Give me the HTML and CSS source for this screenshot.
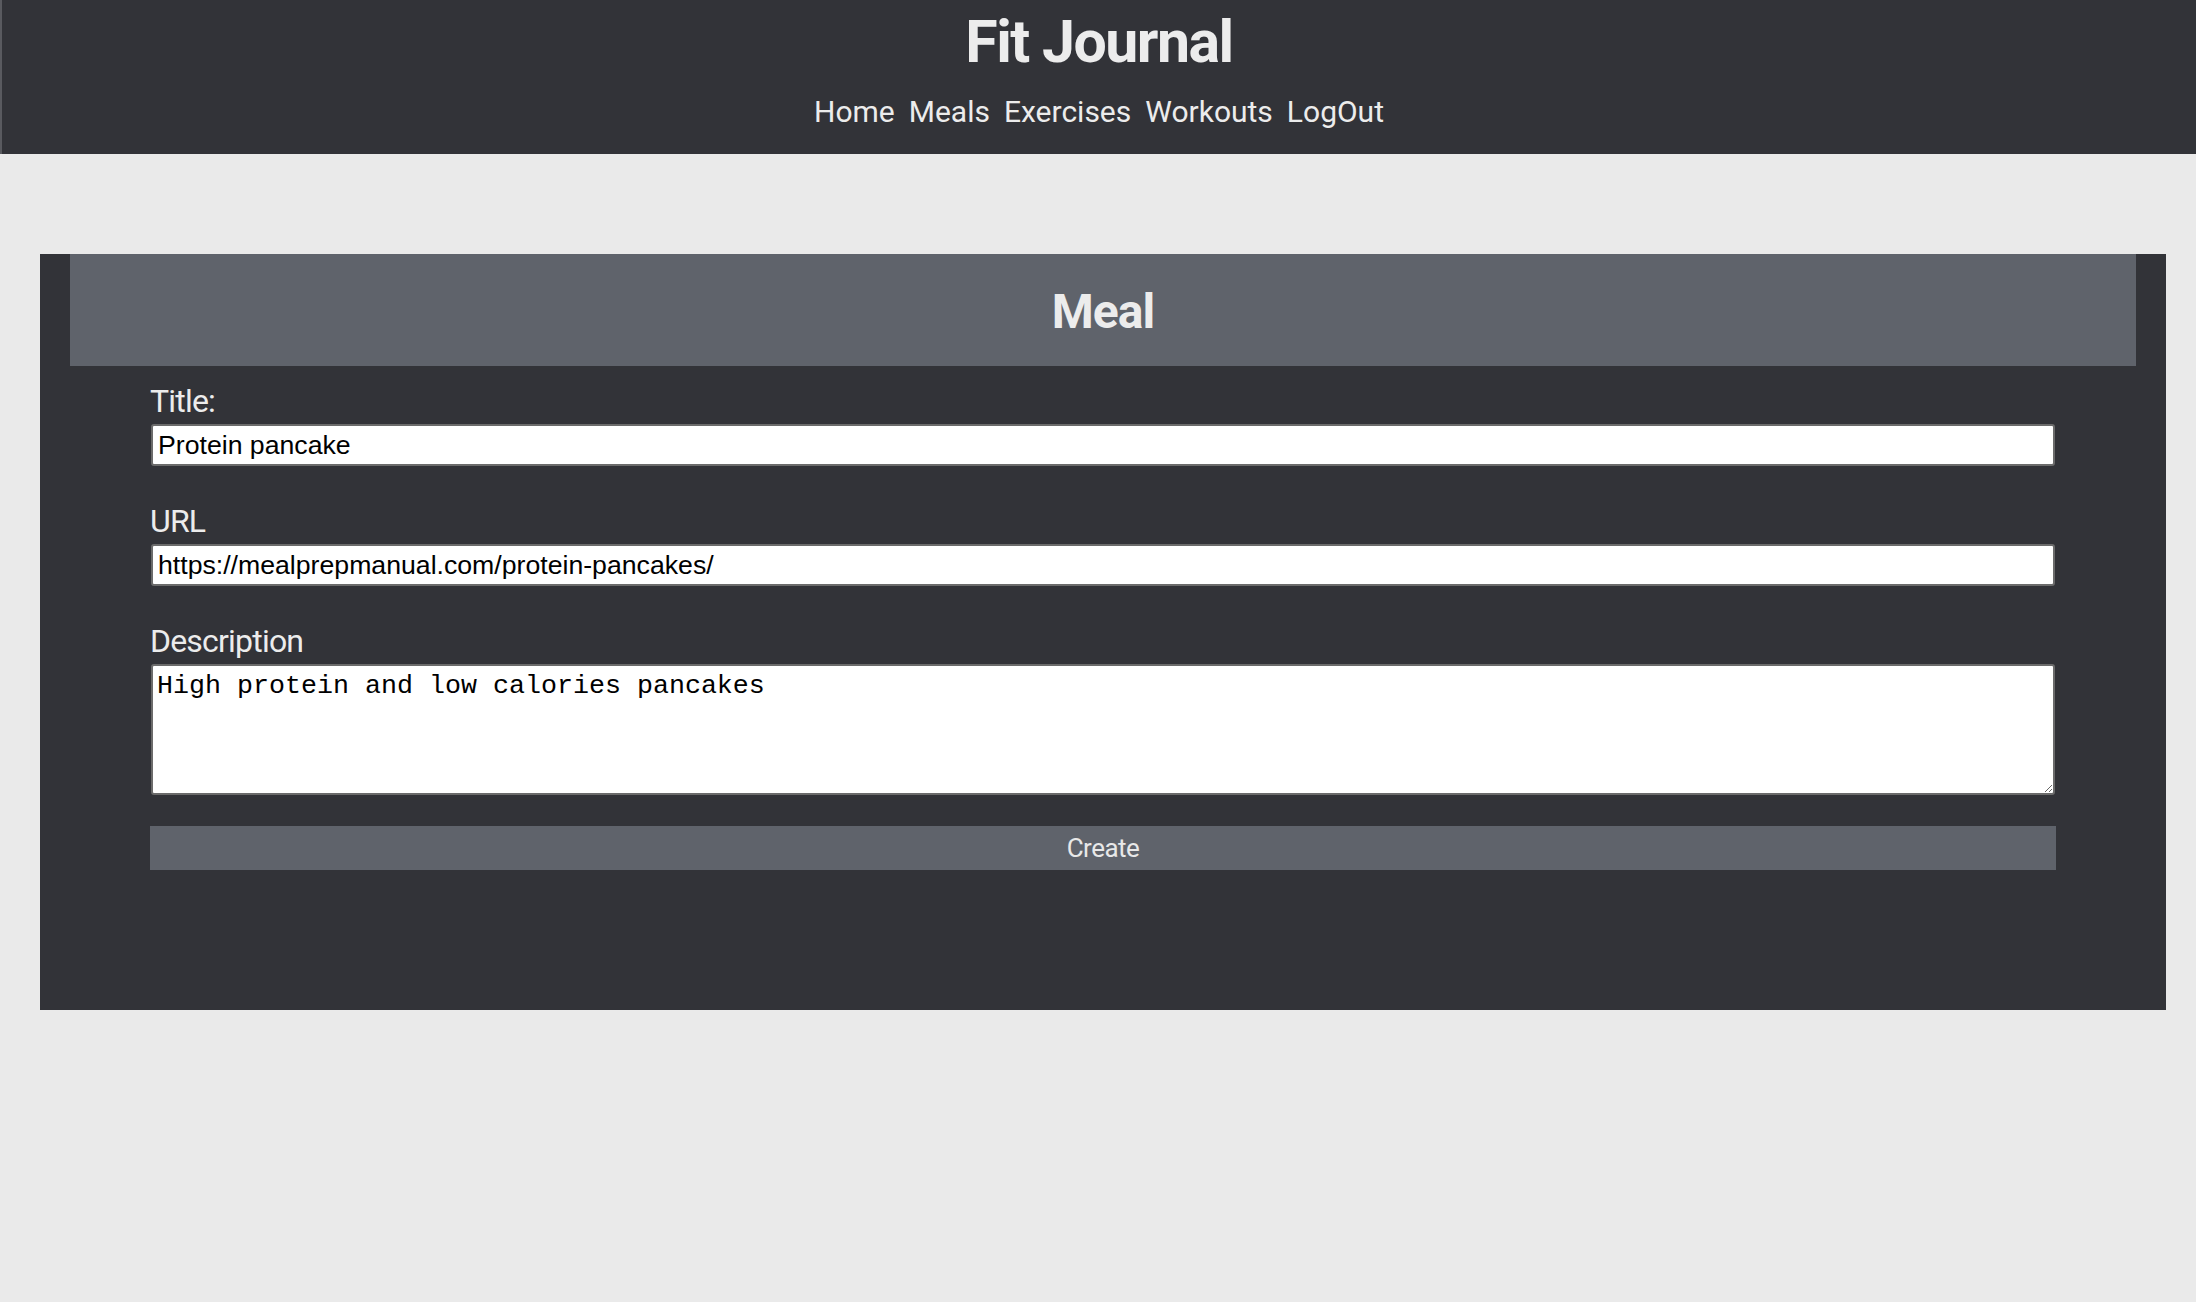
FILE: index.html
```html
<!DOCTYPE html>
<html lang="en">
<head>
<meta charset="utf-8">
<title>Fit Journal</title>
<link rel="stylesheet" href="styles.css">
</head>
<body>
<header class="site-header">
  <h1 class="brand">Fit Journal</h1>
  <nav class="nav">
    <a class="nav-link" href="#">Home</a>
    <a class="nav-link" href="#">Meals</a>
    <a class="nav-link" href="#">Exercises</a>
    <a class="nav-link" href="#">Workouts</a>
    <a class="nav-link" href="#">LogOut</a>
  </nav>
</header>
<main class="main">
  <section class="card">
    <div class="card-head"><h2 class="card-title">Meal</h2></div>
    <form class="form">
      <div class="field">
        <label class="label" for="title">Title:</label>
        <input class="input" id="title" type="text" value="Protein pancake">
      </div>
      <div class="field">
        <label class="label" for="url">URL</label>
        <input class="input" id="url" type="text" value="https://mealprepmanual.com/protein-pancakes/">
      </div>
      <div class="field field-last">
        <label class="label" for="desc">Description</label>
        <textarea class="textarea" id="desc">High protein and low calories pancakes</textarea>
      </div>
      <button class="btn" type="button">Create</button>
    </form>
  </section>
</main>
</body>
</html>
```

FILE: styles.css
```css
html, body {
  margin: 0;
  padding: 0;
}
body {
  background: #eaeaea;
  font-family: "Roboto", "Liberation Sans", sans-serif;
  color: #eaeaea;
  min-height: 1302px;
}
.site-header {
  box-sizing: border-box;
  height: 154px;
  background: #323338;
  border-left: 2px solid #595a5f;
  padding-top: 7px;
  text-align: center;
}
.brand {
  margin: 0;
  font-size: 59px;
  line-height: 70px;
  font-weight: 700;
  letter-spacing: -1.5px;
  color: #ececec;
}
.nav {
  margin-top: 17px;
  display: flex;
  justify-content: center;
  gap: 14px;
  line-height: 35px;
}
.nav-link {
  font-size: 30px;
  color: #ececec;
  text-decoration: none;
}
.main {
  padding: 100px 30px 0 40px;
}
.card {
  background: #323338;
  padding-bottom: 140px;
}
.card-head {
  margin: 0 30px;
  height: 112px;
  background: #5f636b;
  display: flex;
  align-items: center;
  justify-content: center;
}
.card-title {
  margin: 0;
  padding-top: 3px;
  font-size: 48px;
  line-height: 1;
  font-weight: 700;
  letter-spacing: -1px;
  color: #ececec;
}
.form {
  padding: 16px 110px 0;
}
.field {
  margin-bottom: 36px;
}
.field-last {
  margin-bottom: 31px;
}
.label {
  display: block;
  font-size: 32px;
  line-height: 38px;
  letter-spacing: -0.8px;
  margin-bottom: 4px;
  color: #ececec;
}
.input,
.textarea {
  display: block;
  box-sizing: border-box;
  width: calc(100% - 2px);
  margin: 0 1px;
  background: #fff;
  border: 2px solid #6b6b6b;
  border-radius: 3px;
  color: #000;
  outline: none;
}
.input {
  height: 42px;
  padding: 0 5px;
  font-family: "Liberation Sans", Arial, sans-serif;
  font-size: 26.67px;
}
.textarea {
  height: 131px;
  padding: 5px 4px 4px;
  font-family: "Liberation Mono", "Courier New", monospace;
  font-size: 26.67px;
  resize: vertical;
}
.btn {
  display: block;
  width: 100%;
  height: 44px;
  border: none;
  background: #5f636b;
  color: #e8e8e8;
  font-family: "Roboto", "Liberation Sans", sans-serif;
  font-size: 26px;
  letter-spacing: -0.5px;
  padding: 0;
}
```
